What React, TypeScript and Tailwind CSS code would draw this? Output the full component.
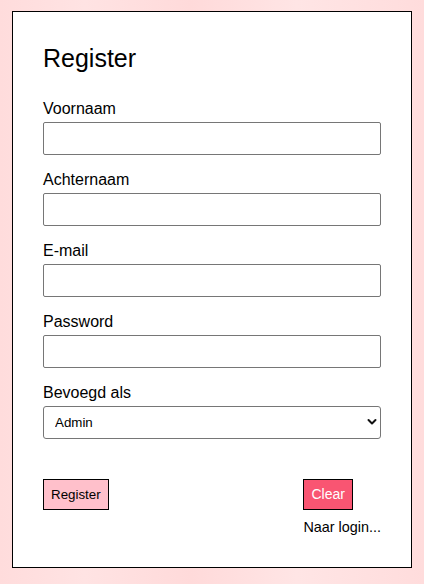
import React, { useState } from 'react'

const FIELDS = [
  { name: 'voornaam', label: 'Voornaam', type: 'text' },
  { name: 'achternaam', label: 'Achternaam', type: 'text' },
  { name: 'email', label: 'E-mail', type: 'email' },
  { name: 'password', label: 'Password', type: 'password' },
]

export default function App() {
  const [values, setValues] = useState<Record<string, string>>({})
  const [role, setRole] = useState('admin')

  const clear = () => {
    setValues({})
    setRole('admin')
  }

  return (
    <div className="min-h-[584px] w-[424px] bg-[linear-gradient(90deg,#ffdcdc_0%,#ffe3e3_20%,#ffdada_45%,#ffe5e5_70%,#ffdcdc_100%)] pl-[12px] pt-[11px] font-['Liberation_Sans',Arial,sans-serif] text-black">
      <div className="h-[557px] w-[400px] border border-black bg-white px-[30px] pt-[32px]">
        <h1 className="mb-[30px] text-[25px] leading-[28px] font-normal">Register</h1>

        <form onSubmit={e => e.preventDefault()} className="flex flex-col">
          {FIELDS.map(f => (
            <div key={f.name} className="mb-[18px] flex flex-col">
              <label htmlFor={f.name} className="mb-[6px] text-[16px] leading-[14px]">{f.label}</label>
              <input
                id={f.name}
                type={f.type}
                value={values[f.name] ?? ''}
                onChange={e => setValues(v => ({ ...v, [f.name]: e.target.value }))}
                className="h-[33px] w-full rounded-[2px] border border-[#767676] bg-white px-2 text-[13px] outline-none"
              />
            </div>
          ))}

          <div className="flex flex-col">
            <label htmlFor="rol" className="mb-[6px] text-[16px] leading-[14px]">Bevoegd als</label>
            <div className="relative">
              <select
                id="rol"
                value={role}
                onChange={e => setRole(e.target.value)}
                className="h-[33px] w-full appearance-none rounded-[3px] border border-[#767676] bg-white pl-[11px] text-[13.33px] outline-none"
              >
                <option value="admin">Admin</option>
                <option value="docent">Docent</option>
                <option value="student">Student</option>
              </select>
              <svg
                className="pointer-events-none absolute right-[4px] top-[12px]"
                width="10"
                height="8"
                viewBox="0 0 10 8"
                fill="none"
              >
                <path d="M1.5 2 L5 5.5 L8.5 2" stroke="#111" strokeWidth="2" strokeLinecap="round" strokeLinejoin="round" />
              </svg>
            </div>
          </div>

          <div className="mt-[40px] flex items-start justify-between">
            <button
              type="submit"
              className="border border-black bg-[#ffc0cb] px-[7px] py-[7px] text-[13.33px] leading-[15px]"
            >
              Register
            </button>
            <div className="flex flex-col items-start">
              <button
                type="button"
                onClick={clear}
                className="border border-black bg-[#f95572] px-[7px] py-[7px] text-[14px] leading-[15px] text-white"
              >
                Clear
              </button>
              <a className="mt-[7px] cursor-pointer text-[14.4px] leading-[20px]">Naar login...</a>
            </div>
          </div>
        </form>
      </div>
    </div>
  )
}
